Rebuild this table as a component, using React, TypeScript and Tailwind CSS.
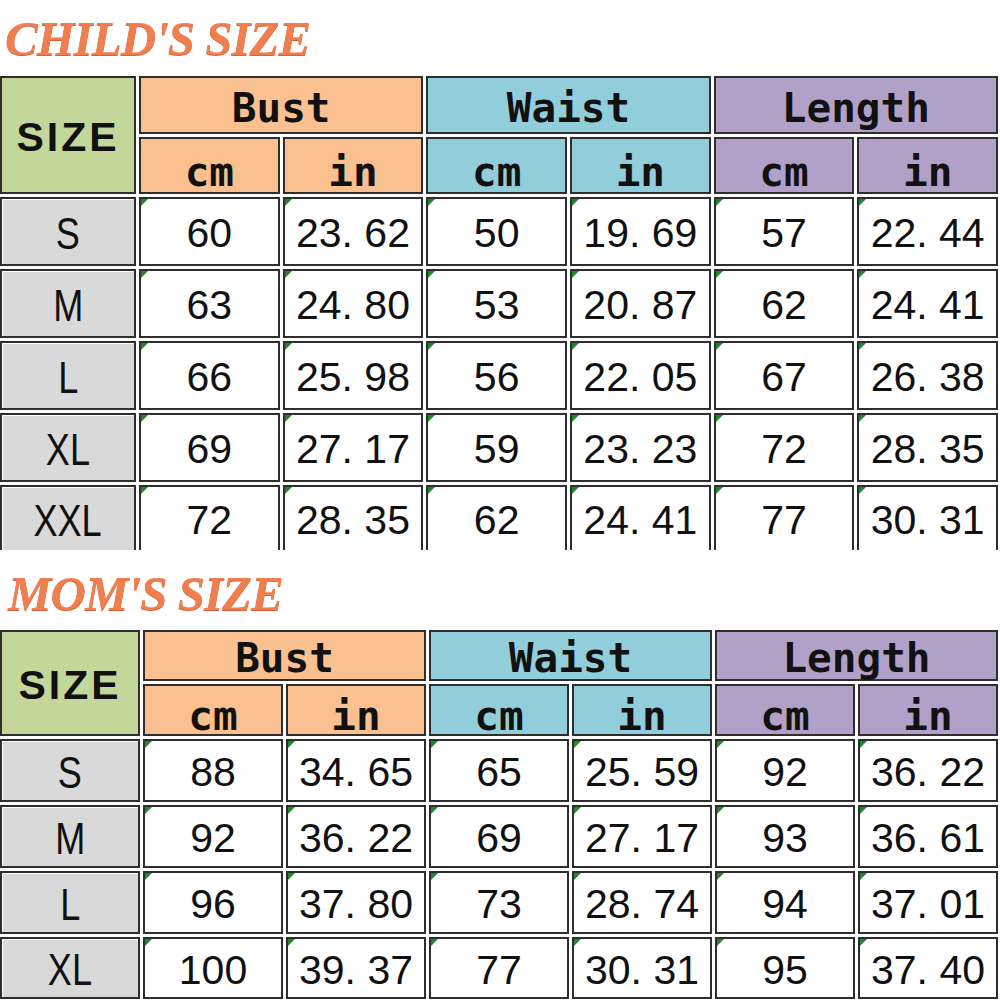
import React from "react";

const child = [
  ["S", "60", "23. 62", "50", "19. 69", "57", "22. 44"],
  ["M", "63", "24. 80", "53", "20. 87", "62", "24. 41"],
  ["L", "66", "25. 98", "56", "22. 05", "67", "26. 38"],
  ["XL", "69", "27. 17", "59", "23. 23", "72", "28. 35"],
  ["XXL", "72", "28. 35", "62", "24. 41", "77", "30. 31"],
];

const mom = [
  ["S", "88", "34. 65", "65", "25. 59", "92", "36. 22"],
  ["M", "92", "36. 22", "69", "27. 17", "93", "36. 61"],
  ["L", "96", "37. 80", "73", "28. 74", "94", "37. 01"],
  ["XL", "100", "39. 37", "77", "30. 31", "95", "37. 40"],
];

const mono = { fontFamily: '"DejaVu Sans Mono", "Liberation Mono", monospace' };
const sans = { fontFamily: '"Liberation Sans", Arial, sans-serif' };
const serif = { fontFamily: '"Liberation Serif", "Times New Roman", serif' };

function Title({ text, className }: { text: string; className: string }) {
  return (
    <div className={className}>
      <span
        style={serif}
        className="text-[49px] leading-none font-bold italic tracking-[-1px] text-[#f07f50] [text-shadow:0_1px_0_#d8603a]"
      >
        {text}
      </span>
    </div>
  );
}

function Head({ label, bg, className = "" }: { label: string; bg: string; className?: string }) {
  return (
    <div
      style={mono}
      className={`flex items-center justify-center border-2 border-[#2e2e2e] text-[41px] font-bold leading-none text-[#111] ${bg} ${className}`}
    >
      {label}
    </div>
  );
}

function Table({ rows, grid, lastOpen }: { rows: string[][]; grid: string; lastOpen?: boolean }) {
  return (
    <div className={`grid w-[998px] gap-[3px] bg-white ${grid}`}>
      <div
        style={sans}
        className="row-span-2 flex items-center justify-center border-2 border-[#2e2e2e] bg-[#c4d79b] pt-[4px] text-[41px] font-bold leading-none tracking-[3px] text-[#111]"
      >
        SIZE
      </div>
      <Head label="Bust" bg="bg-[#fac090]" className="col-span-2 pt-[6px]" />
      <Head label="Waist" bg="bg-[#92cddc]" className="col-span-2 pt-[6px]" />
      <Head label="Length" bg="bg-[#b1a0c7]" className="col-span-2 pt-[6px]" />
      <Head label="cm" bg="bg-[#fac090]" className="pt-[13px]" />
      <Head label="in" bg="bg-[#fac090]" className="pt-[13px]" />
      <Head label="cm" bg="bg-[#92cddc]" className="pt-[13px]" />
      <Head label="in" bg="bg-[#92cddc]" className="pt-[13px]" />
      <Head label="cm" bg="bg-[#b1a0c7]" className="pt-[13px]" />
      <Head label="in" bg="bg-[#b1a0c7]" className="pt-[13px]" />
      {rows.map((r, ri) => {
        const last = lastOpen && ri === rows.length - 1;
        const b = last ? "border-2 border-b-0" : "border-2";
        return (
          <React.Fragment key={ri}>
            <div
              style={sans}
              className={`flex items-center justify-center ${b} border-[#2e2e2e] bg-[#d9d9d9] pt-[4px] shadow-[inset_1px_1px_0_#ffffff] text-[44px] leading-none text-[#111]`}
            >
              <span className="inline-block scale-x-[0.82]">{r[0]}</span>
            </div>
            {r.slice(1).map((v, ci) => (
              <div
                key={ci}
                style={sans}
                className={`relative flex items-center justify-center ${b} border-[#2e2e2e] bg-white pt-[4px] text-[41px] leading-none text-[#111]`}
              >
                <span className="absolute left-0 top-0 h-0 w-0 border-r-[7px] border-t-[7px] border-r-transparent border-t-[#1f8a2c]" />
                {v}
              </div>
            ))}
          </React.Fragment>
        );
      })}
    </div>
  );
}

export default function App() {
  return (
    <div className="h-[1000px] w-[1000px] overflow-hidden bg-white">
      <Title text="CHILD'S SIZE" className="h-[76px] pl-[5px] pt-[14px]" />
      <Table
        rows={child}
        grid="grid-cols-[136px_repeat(6,minmax(0,1fr))] grid-rows-[58px_57px_69px_69px_69px_69px_65px]"
        lastOpen
      />
      <Title text="MOM'S SIZE" className="h-[80px] pl-[8px] pt-[19px]" />
      <Table
        rows={mom}
        grid="grid-cols-[140px_repeat(6,minmax(0,1fr))] grid-rows-[51px_52px_63px_63px_63px_62px]"
      />
    </div>
  );
}
